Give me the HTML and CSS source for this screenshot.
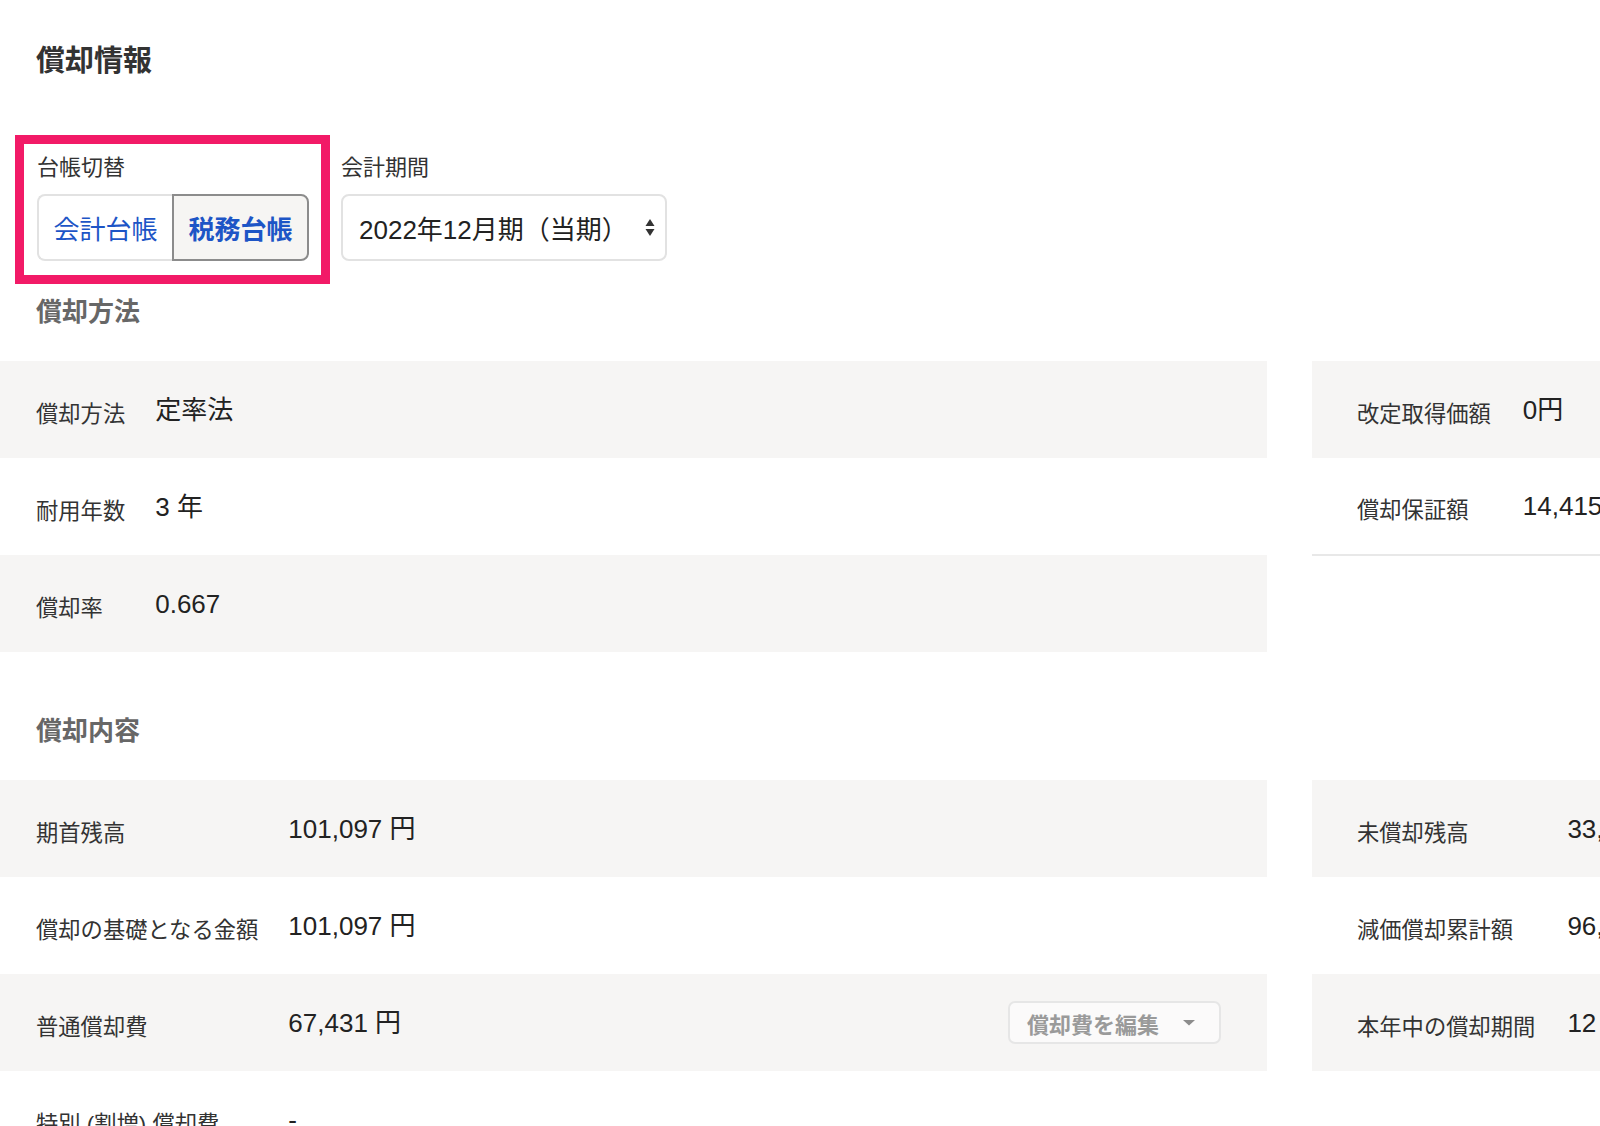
FILE: index.html
```html
<!DOCTYPE html>
<html lang="ja">
  <head>
    <meta charset="UTF-8" />
    <meta name="viewport" content="width=device-width, initial-scale=1.0" />
    <title>償却情報</title>

    <link rel="stylesheet" href="styles.css">
  </head>
  <body>
    <main class="page">
      <h1 class="page-title">償却情報</h1>

      <div class="switchers">
        <div class="field field--marked">
          <div class="field-label">台帳切替</div>
          <div class="segmented">
            <button class="seg-btn" type="button">会計台帳</button>
            <button class="seg-btn active" type="button">税務台帳</button>
          </div>
        </div>

        <div class="field">
          <div class="field-label">会計期間</div>
          <div class="select">
            <span>2022年12月期（当期）</span>
            <svg class="select-arrows" width="10" height="20" viewBox="0 0 10 20">
              <path d="M5 1 L9.5 8 L0.5 8 Z" fill="#333" />
              <path d="M0.5 11 L9.5 11 L5 18 Z" fill="#333" />
            </svg>
          </div>
        </div>
      </div>

      <!-- 償却方法 -->
      <section class="block block--method">
        <h2 class="block-title">償却方法</h2>
        <div class="block-body">
          <table class="info info--main">
            <tr>
              <td class="info-label">償却方法</td>
              <td class="info-value">定率法</td>
            </tr>
            <tr>
              <td class="info-label">耐用年数</td>
              <td class="info-value">3 年</td>
            </tr>
            <tr>
              <td class="info-label">償却率</td>
              <td class="info-value">0.667</td>
            </tr>
          </table>

          <table class="info info--side">
            <tr>
              <td class="info-label">改定取得価額</td>
              <td class="info-value">0円</td>
            </tr>
            <tr>
              <td class="info-label">償却保証額</td>
              <td class="info-value">14,415円</td>
            </tr>
          </table>
        </div>
      </section>

      <!-- 償却内容 -->
      <section class="block block--detail">
        <h2 class="block-title">償却内容</h2>
        <div class="block-body">
          <table class="info info--main">
            <tr>
              <td class="info-label">期首残高</td>
              <td class="info-value">101,097 円</td>
            </tr>
            <tr>
              <td class="info-label">償却の基礎となる金額</td>
              <td class="info-value">101,097 円</td>
            </tr>
            <tr>
              <td class="info-label">普通償却費</td>
              <td class="info-value">
                <div class="value-row">
                  <span>67,431 円</span>
                  <button class="edit-btn" type="button">
                    償却費を編集
                    <svg width="12" height="6" viewBox="0 0 12 6">
                      <path d="M0 0 L12 0 L6 5.5 Z" fill="#8c8c8c" />
                    </svg>
                  </button>
                </div>
              </td>
            </tr>
            <tr>
              <td class="info-label">特別 (割増) 償却費</td>
              <td class="info-value">-</td>
            </tr>
          </table>

          <table class="info info--side">
            <tr>
              <td class="info-label">未償却残高</td>
              <td class="info-value">33,666 円</td>
            </tr>
            <tr>
              <td class="info-label">減価償却累計額</td>
              <td class="info-value">96,334 円</td>
            </tr>
            <tr>
              <td class="info-label">本年中の償却期間</td>
              <td class="info-value">12 ヶ月</td>
            </tr>
          </table>
        </div>
      </section>
    </main>
  </body>
</html>
```

FILE: styles.css
```css
html,
body {
  margin: 0;
  padding: 0;
  overflow: hidden;
  background: #fff;
}

body {
  font-family: "Liberation Sans", "Noto Sans CJK JP", sans-serif;
  color: #333;
}

.page {
  padding-top: 41px;
}

.page-title {
  margin: 0;
  padding: 0 36px;
  font-size: 29px;
  line-height: 40px;
  font-weight: bold;
  color: #333;
}

/* 台帳切替 / 会計期間 */
.switchers {
  display: flex;
  align-items: flex-start;
  gap: 20px;
  margin-top: 63px;
  padding-left: 24px;
}

.field {
  padding: 9px 0 14px;
}

.field--marked {
  padding: 9px 12px 14px 13px;
  outline: 9px solid #f21a67;
}

.field-label {
  font-size: 22px;
  line-height: 30px;
  color: #333;
}

.segmented {
  display: flex;
  margin-top: 11px;
}

.seg-btn {
  box-sizing: border-box;
  width: 135px;
  height: 67px;
  padding: 0;
  white-space: nowrap;
  font-family: inherit;
  font-size: 26px;
  color: #1d55c6;
  background: #fff;
  border: 2px solid #e2e2e2;
  border-right: none;
  border-radius: 8px 0 0 8px;
}

.seg-btn.active {
  width: 137px;
  font-weight: bold;
  background: #f6f5f3;
  border: 2px solid #8c8c8c;
  border-radius: 0 8px 8px 0;
}

.select {
  display: flex;
  align-items: center;
  justify-content: space-between;
  box-sizing: border-box;
  width: 326px;
  height: 67px;
  margin-top: 11px;
  padding: 0 10px 0 16px;
  font-size: 26px;
  color: #222;
  background: #fff;
  border: 2px solid #e2e2e2;
  border-radius: 8px;
}

/* sections */
.block--method {
  margin-top: 20px;
}

.block--detail {
  margin-top: 62px;
}

.block-title {
  margin: 0 0 32px;
  padding: 0 36px;
  font-size: 26px;
  line-height: 34px;
  font-weight: bold;
  color: #676767;
}

.block-body {
  display: flex;
  align-items: flex-start;
  gap: 45px;
}

.info {
  flex: none;
  border-collapse: collapse;
  border-spacing: 0;
}

.info--main {
  width: 1267px;
}

.info--side {
  width: 700px;
}

.info tr {
  height: 97px;
}

.info tr:nth-child(odd) {
  background: #f6f5f4;
}

.block--method .info--side tr:last-child td {
  border-bottom: 2px solid #e8e8e8;
}

.info td {
  padding: 0;
  vertical-align: middle;
}

.info .info-label {
  width: 1%;
  white-space: nowrap;
  padding: 10px 30px 0 36px;
  font-size: 22.3px;
  line-height: 30px;
  color: #333;
}

.info--side .info-label {
  padding: 10px 32px 0 45px;
}

.info-value {
  font-size: 26px;
  line-height: 34px;
  color: #222;
  white-space: nowrap;
}

.value-row {
  display: flex;
  align-items: center;
  justify-content: space-between;
  padding-right: 46px;
}

.edit-btn {
  display: flex;
  align-items: center;
  justify-content: space-between;
  box-sizing: border-box;
  width: 213px;
  height: 43px;
  padding: 0 24px 0 17px;
  font-family: inherit;
  font-size: 22px;
  font-weight: bold;
  color: #9a9a9a;
  background: #fbfafa;
  border: 2px solid #e6e6e6;
  border-radius: 7px;
}
```
